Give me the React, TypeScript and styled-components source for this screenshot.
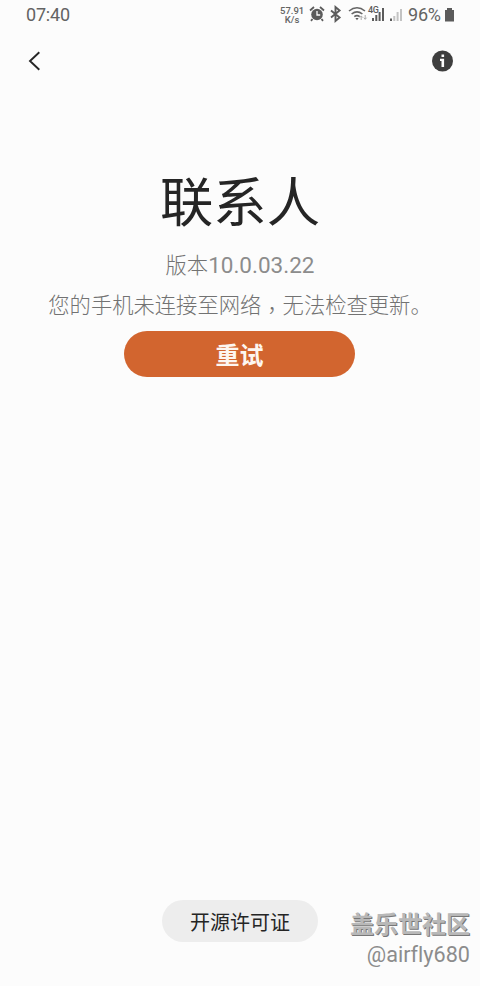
import React from 'react';
import styled, { createGlobalStyle } from 'styled-components';

const GlobalStyle = createGlobalStyle`
  * { box-sizing: border-box; }
  body { margin: 0; background: #fcfcfc; }
  button { border: 0; padding: 0; cursor: pointer; }
`;

const Screen = styled.main`
  position: relative;
  display: flex;
  flex-direction: column;
  width: 480px;
  height: 986px;
  overflow: hidden;
  background: #fcfcfc;
  color: #252525;
  font-family: Roboto, 'Noto Sans CJK SC', sans-serif;
`;

const StatusBar = styled.header`
  display: flex;
  align-items: center;
  justify-content: space-between;
  height: 30px;
  padding: 0 25px 0 26px;
  color: #636363;
`;

const Clock = styled.time`
  font-size: 18px;
  line-height: 30px;
  letter-spacing: -0.2px;
`;

const StatusIcons = styled.div`
  display: flex;
  align-items: center;
  height: 30px;
`;

const NetSpeed = styled.div`
  display: flex;
  flex-direction: column;
  width: 24px;
  margin-right: 5px;
  font-size: 9.5px;
  font-weight: 500;
  line-height: 9px;
  text-align: center;
  white-space: nowrap;
`;

const Glyphs = styled.svg`
  display: block;
  flex: none;
`;

const NetworkLabel = styled.text`
  font: 500 9px Roboto, sans-serif;
`;

const Percent = styled.span`
  margin: 0 3px 0 5px;
  width: 33px;
  font-size: 18px;
  line-height: 30px;
  letter-spacing: -0.2px;
  white-space: nowrap;
`;

const AppBar = styled.nav`
  display: flex;
  align-items: center;
  justify-content: space-between;
  height: 62px;
  padding: 0 26px 0 27px;
`;

const IconButton = styled.button`
  display: flex;
  background: none;
`;

const About = styled.section`
  display: flex;
  flex-direction: column;
  align-items: center;
  flex: 1;
  padding-top: 72px;
`;

const Title = styled.h1`
  margin: 0;
  font-size: 53.4px;
  font-weight: 400;
  line-height: 80px;
`;

const Info = styled.p`
  margin: 0;
  font-size: 21.3px;
  font-weight: 300;
  line-height: 38px;
  color: #727272;
  white-space: nowrap;
`;

const VersionLine = styled(Info)`
  padding-top: 2px;
  line-height: 38px;
`;

const VersionNumber = styled.span`
  font-size: 22.5px;
  font-weight: 400;
  color: #8c8c8c;
`;

const CenteredComma = styled.span`
  font-family: 'Noto Sans CJK TC', sans-serif;
  position: relative;
  top: 5px;
`;

const RetryButton = styled.button`
  width: 231px;
  height: 46px;
  margin: 6px 1px 0 0;
  padding-top: 2px;
  border-radius: 23px;
  background: #d2652f;
  color: #fdf6f0;
  font: 700 24px/46px Roboto, 'Noto Sans CJK SC', sans-serif;
`;

const LicenseButton = styled.button`
  width: 156px;
  height: 42px;
  margin: auto 0 44px;
  padding-top: 2px;
  border-radius: 21px;
  background: #ededed;
  color: #252525;
  font: 400 20px/42px Roboto, 'Noto Sans CJK SC', sans-serif;
`;

const Watermark = styled.aside`
  position: absolute;
  right: 10px;
  bottom: 16px;
  text-align: right;
  white-space: nowrap;
`;

const Community = styled.div`
  font-size: 24px;
  font-weight: 700;
  line-height: 30px;
  color: #b8b8b8;
  text-shadow: 1px 1px 0 #777;
`;

const Author = styled.div`
  font-size: 21.6px;
  line-height: 30px;
  color: #8c8c8c;
  font-variant-ligatures: none;
`;

function StatusGlyphs() {
  return (
    <Glyphs width="94" height="30" viewBox="309 0 94 30" fill="#5b5b5b">
      <circle cx="317" cy="14.5" r="5.8" />
      <path d="M310 10.5l4-3.5M320 7l4 3.5M312.5 19l-1.5 1.8M321.5 19l1.5 1.8" stroke="#5b5b5b" strokeWidth="1.8" />
      <path d="M317 11v4h3.2" fill="none" stroke="#fcfcfc" strokeWidth="1.3" />
      <path d="M331 10.5l8.6 7-4.1 3.5V7l4.1 3.5-8.6 7" fill="none" stroke="#5b5b5b" strokeWidth="1.9" />
      <g fill="none" stroke="#666" strokeWidth="1.6">
        <path d="M349 11q8-6.5 16 0" />
        <path d="M351.6 14q5.4-4.4 10.8 0" />
        <path d="M354.3 16.7q2.7-2.2 5.4 0" />
      </g>
      <path d="M355.4 18h3.2l-1.6 2.2z" />
      <path d="M361.2 20v-4M359.8 17.5l1.4-1.6 1.4 1.6M365.2 15v4.2M363.8 17.7l1.4 1.6 1.4-1.6" fill="none" stroke="#aaa" />
      <NetworkLabel x="368" y="13.3" textLength="11">4G</NetworkLabel>
      <path d="M372 18h2v3h-2zM375.3 15h2v6h-2zM378.6 12h2v9h-2zM382 8h2v13h-2z" />
      <path d="M390 18.5h2V21h-2z" />
      <path d="M393.3 16h2v5h-2zM396.6 12h2v9h-2zM400 9h2v12h-2z" fill="#c3c3c3" />
    </Glyphs>
  );
}

export default function App() {
  return (
    <>
      <GlobalStyle />
      <Screen>
        <StatusBar>
          <Clock>07:40</Clock>
          <StatusIcons>
            <NetSpeed><span>57.91</span><span>K/s</span></NetSpeed>
            <StatusGlyphs />
            <Percent>96%</Percent>
            <Glyphs width="11" height="16" viewBox="0 0 11 16">
              <path d="M3 1h5v2h2v11.5H1V3h2z" fill="#5b5b5b" />
            </Glyphs>
          </StatusIcons>
        </StatusBar>
        <AppBar>
          <IconButton aria-label="返回">
            <Glyphs width="14" height="20" viewBox="0 0 14 20">
              <path d="M12.3 1.3L3 10l9.3 8.7" fill="none" stroke="#252525" strokeWidth="1.9" />
            </Glyphs>
          </IconButton>
          <IconButton aria-label="应用信息">
            <Glyphs width="22" height="22" viewBox="0 0 22 22">
              <circle cx="10.5" cy="11" r="10.5" fill="#3e3e3e" />
              <path d="M9.5 4.5h2.6V7H9.5zM8 8.7h4.1V17H9.5v-6H8z" fill="#fcfcfc" />
            </Glyphs>
          </IconButton>
        </AppBar>
        <About>
          <Title>联系人</Title>
          <VersionLine>版本<VersionNumber>10.0.03.22</VersionNumber></VersionLine>
          <Info>您的手机未连接至网络<CenteredComma>，</CenteredComma>无法检查更新。</Info>
          <RetryButton>重试</RetryButton>
          <LicenseButton>开源许可证</LicenseButton>
        </About>
        <Watermark>
          <Community>盖乐世社区</Community>
          <Author>@airfly680</Author>
        </Watermark>
      </Screen>
    </>
  );
}
